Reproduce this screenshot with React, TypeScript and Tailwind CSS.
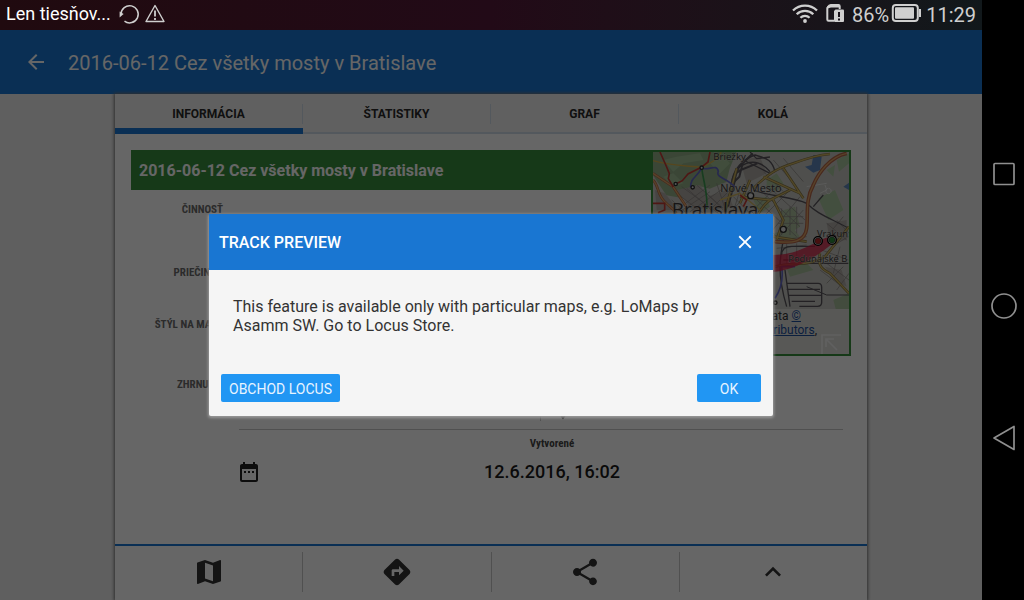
import React from 'react';
import { MdArrowBack, MdClose, MdDateRange, MdDirections, MdExpandLess, MdMap, MdPlace, MdShare } from 'react-icons/md';

const TABS = ['INFORMÁCIA', 'ŠTATISTIKY', 'GRAF', 'KOLÁ'];

const ACTIONS = [
  { label: 'Mapa', icon: MdMap },
  { label: 'Navigácia', icon: MdDirections },
  { label: 'Zdieľať', icon: MdShare },
  { label: 'Viac', icon: MdExpandLess },
];

const StatusBar: React.FC = () => (
  <div className="flex h-[30px] shrink-0 items-center justify-between bg-linear-to-r from-[#200a0f] via-[#220a17] to-[#11181b] pl-1.5 pr-1.5 text-[20px] leading-[30px] text-[#cfcfcf]">
    <div className="flex items-center pb-0.5">
      <span className="text-[18px] leading-7 text-white">Len tiesňov...</span>
      <svg className="ml-1.5 h-6 w-6" viewBox="0 0 24 24" fill="none" stroke="currentColor" strokeWidth="1.5">
        <path d="M7.5 19.2A8.6 8.6 0 1 0 4 12.2" />
        <path d="M2.6 9.5v6l4-3.4z" fill="currentColor" stroke="none" />
      </svg>
      <svg className="ml-0.5 h-6 w-6" viewBox="0 0 24 24" fill="none" stroke="currentColor" strokeWidth="1.4" strokeLinejoin="round">
        <path d="M12 3.5 21 19.5H3z" />
        <path d="M12 8.5v6M12 16v2" strokeWidth="1.8" />
      </svg>
    </div>
    <div className="flex items-center">
      <svg className="mb-1 h-5 w-[26px]" viewBox="0 0 26 20" fill="none" stroke="currentColor" strokeWidth="2.3">
        <path d="M1 7.5a17 17 0 0 1 24 0" />
        <path d="M4.7 11.2a11.8 11.8 0 0 1 16.6 0" />
        <path d="M8.4 14.8a6.6 6.6 0 0 1 9.2 0" />
        <circle cx="13" cy="18" r="1.9" fill="currentColor" stroke="none" />
      </svg>
      <svg className="mb-1 ml-2 h-5 w-[18px]" viewBox="0 0 18 20" fill="none">
        <path d="M8 17.8H2.5a1.2 1.2 0 0 1-1.2-1.2V5L5 2h7.5a1.2 1.2 0 0 1 1.2 1.2V6" stroke="currentColor" strokeWidth="2" />
        <path d="M1 5.5V3.5L3 1.5h10v3H5z" fill="currentColor" />
        <path d="M9.5 6.5H17a1 1 0 0 1 1 1V18a1 1 0 0 1-1 1H9a1 1 0 0 1-1-1V8z" fill="currentColor" />
        <path d="M13 9v5M13 15.5v2" stroke="#171219" strokeWidth="2" />
      </svg>
      <span className="ml-2">86%</span>
      <svg className="mb-1 ml-0.5 h-5 w-[31px]" viewBox="0 0 31 20" fill="none">
        <rect x="1.8" y="2" width="25" height="16" rx="3" stroke="currentColor" strokeWidth="2" />
        <rect x="4" y="4.3" width="19" height="11.4" rx="1" fill="currentColor" />
        <path d="M28 6h2v8h-2z" fill="currentColor" />
      </svg>
      <span className="ml-1">11:29</span>
    </div>
  </div>
);

const TrackMap: React.FC = () => (
  <svg className="block h-[157px] w-full" viewBox="39 36 588 471" preserveAspectRatio="none" aria-hidden="true">
    <rect x="39" y="36" width="588" height="471" fill="#c6c6c0" />
    {/* woods and parks */}
    <g fill="#93b088">
      <path d="M39 36h250l-20 50-10 40-50 20-40-10-30 40-60-10-40-60z" />
      <path d="M380 120l30-20 20 30-20 25-30-10zM340 180l40-10 10 30-30 20z" fill="#aac29b" />
      <path d="M590 60l37-20v30l-30 25zM535 175l50-25 25 60-45 30zM560 90l25-15-5 35z" fill="#a8c69d" />
      <path d="M415 215l50-15 15 60-40 25zM400 280l60-15 20 25-60 20z" fill="#adc19f" />
      <path d="M440 385l60-15 20 20-70 20zM580 480l47-20v47h-40z" fill="#a7bf9b" />
    </g>
    <g fill="#b9dcb0" fillOpacity="0.4">
      <path d="M70 60l40-10 20 20-30 25zM110 50l70-10 10 20-60 10zM70 110l30-10 30 30-30 10zM210 70l40-20 20 20-30 30z" />
    </g>
    <g fill="#b0aba6">
      <path d="M110 150l70-15 40 60-60 20zM200 170l60-20 20 50-70 10zM300 60l60-10 20 50-60 30z" />
      <path d="M560 250l60-10v60l-50 5zM555 380l50 10 15 50-40-20zM45 150l30 10 40 50H50z" />
    </g>
    <path d="M495 80l20-5 5-30 25 5-5 40-20 8zM610 140l17-12v22z" fill="#5f88bb" />
    {/* street grid */}
    <g fill="none" stroke="#86817f" strokeWidth="2">
      <path d="M340 170l130 120M360 150l120 110M385 140l110 100M330 210l100 100M420 130l-90 90M450 150l-110 110M480 170l-90 110M490 210l-90 100" />
      <path d="M110 160l80 60M140 145l80 70M170 135l80 70M110 210l100-75M150 215l100-70M400 60l70 80M430 55l60 70M370 95l60 60" />
      <path d="M95 180l40 35M120 215l90-60M190 150l60 60M230 130l30 90M210 210l60-60M125 140l110 80M280 170l50 50M270 220l60-70M300 150l-20 65" />
      <path d="M540 390l80 60M560 370l67 50M560 430l50-50M590 450l37-50M560 250l60 50M590 240l37 40M560 290l50-60M545 330l80 30M600 320l-20 80M575 320l50-30" />
      <path d="M420 300l80-10M410 325l90-10M440 310v60M470 310v60M420 230h70M415 250h75M425 205v80M450 200v85M470 200v80" />
      <path d="M540 160l20-10-5-15M500 140l60-10M565 145a8 8 0 1 0 1 0" stroke="#eee" />
    </g>
    {/* railways */}
    <g fill="none" stroke="#57545a" strokeWidth="4">
      <path d="M285 125c5-50 30-70 60-80M275 135c0-50 40-80 70-90 30 10 50 10 60 50M300 80c30-20 60-20 90 15M310 60l80 40M265 200l20-75M330 36l20 20 40-5" />
      <path d="M278 130l20-20 10-40 30-30M272 150c5-40 10-50 30-60l50-20" strokeWidth="6" />
      <path d="M340 150c50 20 120 20 160 40 30 30 60 40 127 75M430 300c-10 50-20 100 10 200M520 200l30-35" />
      <path d="M425 345c0-20 15-26 30-26h70M435 390l15 110M440 430h95q10 0 10 12v45q0 12-12 12h-55M440 448h100M445 466h98M455 484h70M430 360h50l15 10h130" />
      <path d="M500 440l60 25h67" strokeWidth="3" />
    </g>
    {/* roads */}
    <g fill="none" stroke="#857648" strokeWidth="8">
      <path d="M340 145c40-40 70-60 120-75 40-15 70-25 110-28M430 85l60 90M370 110l110 50M300 170l90 10 60-30M350 230c20-40 50-60 50-50l30 60-20 60" />
      <path d="M540 340c-10 40 10 50 30 60l57 60M405 380c60-15 100 0 150-30l72-90M330 120l-30 70M400 290l100 15M255 215l35-130" />
    </g>
    <g fill="none" stroke="#cdb360" strokeWidth="4">
      <path d="M39 62c50 15 100 15 145 20 20-10 40-15 60-45" stroke="#d6ae4a" />
      <path d="M340 145c40-40 70-60 120-75 40-15 70-25 110-28M430 85l60 90M370 110l110 50M300 170l90 10 60-30M350 230c20-40 50-60 50-50l30 60-20 60" />
      <path d="M240 180l60-20 60 50M400 290l100 15M540 340c-10 40 10 50 30 60l57 60M405 380c60-15 100 0 150-30l72-90M330 120l-30 70M255 215l35-130" />
    </g>
    <g fill="none" stroke="#b5654a" strokeWidth="11">
      <path d="M620 40c-50 10-85 60-100 95-25 45-15 90-20 130-5 40-40 45-95 40" />
      <path d="M39 120c20 20 10 45 40 70 10 10 20 15 30 30M39 100l60 40 40 60" strokeWidth="8" />
    </g>
    <g fill="none" stroke="#dca666" strokeWidth="4">
      <path d="M620 40c-50 10-85 60-100 95-25 45-15 90-20 130-5 40-40 45-95 40M39 120c20 20 10 45 40 70 10 10 20 15 30 30M39 100l60 40 40 60" />
    </g>
    <g fill="none" stroke="#c23a34" strokeWidth="5">
      <path d="M60 36l20 45 8 20-3 15 15 25M210 36l-6 30-20 16-40 20-17 20-20 10M39 190h35v20l-20 8M300 165l20 15-10 20" />
    </g>
    <path d="M185 82c5 45 20 80 15 125" fill="none" stroke="#3d9a51" strokeWidth="5" />
    <path d="M152 142c0-30 15-25 33-58 20 10 45-15 50 10-10 20 30 20 50 48M405 475c20-30 25-60 20-95h40" fill="none" stroke="#6266c4" strokeWidth="5" />
    <g fill="#ddd" stroke="#2a2a2a" strokeWidth="4">
      <circle cx="185" cy="83" r="5" />
      <circle cx="107" cy="132" r="5" />
      <circle cx="158" cy="142" r="5" />
      <circle cx="332" cy="167" r="9" />
      <circle cx="430" cy="268" r="9" />
      <circle cx="406" cy="488" r="5" />
    </g>
    <path d="M399 345c70 0 110-30 155-50l35-10-10 25c-50 40-110 80-180 86z" fill="#d4183f" fillOpacity="0.75" />
    <g fill="#3a3638" fontFamily="'Open Sans', sans-serif" stroke="#c6c6c0" strokeOpacity="0.6" strokeWidth="3" paintOrder="stroke">
      <text x="220" y="60" fontSize="29">Briežky</text>
      <text x="241" y="155" fontSize="33">Nové Mesto</text>
      <text x="95" y="229" fontSize="57">Bratislava</text>
      <text x="531" y="291" fontSize="28">Vrakun</text>
      <text x="445" y="365" fontSize="28">Podunajské B</text>
    </g>
    <g stroke="#000" strokeWidth="4">
      <circle cx="534" cy="303" r="13" fill="#ddd" />
      <circle cx="534" cy="303" r="9" fill="#b32a2a" strokeWidth="1" />
      <circle cx="576" cy="300" r="13" fill="#ddd" />
      <circle cx="576" cy="300" r="9" fill="#2e8b3a" strokeWidth="1" />
    </g>
  </svg>
);

const MapPreview: React.FC = () => (
  <figure className="relative w-[200px] shrink-0 border-2 border-[#388e3c]">
    <TrackMap />
    <figcaption className="h-[45px] bg-[#dcdcd8] pr-8 text-right text-[12px] leading-[14px] text-[#333]">
      <div className="pr-4">
        Map data{' '}
        <a href="#osm" className="text-[#1c4f9c] underline">©</a>
      </div>
      <a href="#osm" className="whitespace-nowrap text-[#1c4f9c] underline">OpenStreetMap contributors</a>,
    </figcaption>
    <svg className="absolute right-2 bottom-0 h-5 w-5" viewBox="0 0 20 20" fill="none" stroke="#fff" strokeOpacity="0.6" strokeWidth="1.6">
      <path d="M1 20V1h19M5 13V5h8M5 5l11 11" />
    </svg>
  </figure>
);

const RowLabel: React.FC<{ children: React.ReactNode }> = ({ children }) => (
  <dt className="w-[92px] text-right font-['Roboto_Condensed','Liberation_Sans_Narrow',Roboto,sans-serif] text-[11px] leading-4 font-bold whitespace-nowrap text-[#6b6b6b]">
    {children}
  </dt>
);

const TrackInfo: React.FC = () => (
  <div className="flex-1 bg-white p-4">
    <div className="flex items-start">
      <div className="min-w-0 flex-1">
        <h2 className="h-10 bg-[#388e3c] px-2 pt-px text-[16px] leading-10 font-bold text-white">
          2016-06-12 Cez všetky mosty v Bratislave
        </h2>
        <dl className="pt-3">
          <div className="h-[63px]"><RowLabel>ČINNOSŤ</RowLabel></div>
          <div className="h-[52px]"><RowLabel>PRIEČINOK</RowLabel></div>
          <div className="h-10"><RowLabel>ŠTÝL NA MAPE</RowLabel></div>
        </dl>
      </div>
      <MapPreview />
    </div>
    <div className="flex pt-5">
      <dl><RowLabel>ZHRNUTIE</RowLabel></dl>
      <div className="mr-2 ml-4 flex-1">
        <div className="flex h-[53px] justify-center border-b border-[#c8c8c8] pb-2">
          <div className="ml-[30px] flex items-end border-l border-[#c8c8c8] pl-3">
            <MdPlace className="h-5 w-5 text-[#333]" />
          </div>
        </div>
        <div className="flex items-end pt-1.5">
          <MdDateRange className="-ml-0.5 h-6 w-6 text-[#222]" />
          <div className="flex-1 text-center">
            <div className="font-['Roboto_Condensed','Liberation_Sans_Narrow',Roboto,sans-serif] text-[11px] leading-4 font-bold text-[#444]">Vytvorené</div>
            <div className="pt-2 text-[18px] leading-6 font-medium text-[#1a1a1a]">12.6.2016, 16:02</div>
          </div>
        </div>
      </div>
    </div>
  </div>
);

const PreviewDialog: React.FC = () => (
  <div className="absolute inset-0 flex items-center justify-center bg-black/60">
    <div role="dialog" aria-labelledby="dialog-title" className="w-full max-w-[564px] rounded-xs bg-[#f5f5f5] shadow-[0_1px_3px_1px_#999]">
      <div className="flex h-14 items-center justify-between bg-[#1976d2] pr-4 pl-2.5 text-white">
        <h3 id="dialog-title" className="pt-0.5 text-[16px] font-medium">TRACK PREVIEW</h3>
        <button type="button" aria-label="Zavrieť">
          <MdClose className="h-6 w-6 p-px" />
        </button>
      </div>
      <p className="px-6 pt-[27px] pb-[39px] text-[16px] leading-[19px] text-[#333]">
        This feature is available only with particular maps, e.g. LoMaps by Asamm SW. Go to Locus Store.
      </p>
      <div className="flex justify-between px-3 pb-3.5 text-[14px] leading-7 text-[#e8f4ff]">
        <button type="button" className="h-7 rounded-xs bg-[#2196f3] px-2 pt-px">OBCHOD LOCUS</button>
        <button type="button" className="h-7 w-16 rounded-xs bg-[#2196f3] pt-px">OK</button>
      </div>
    </div>
  </div>
);

const NavBar: React.FC = () => (
  <nav className="flex w-[42px] shrink-0 flex-col items-center justify-center gap-[104px] bg-black pt-3 pl-0.5 text-[#8f8f8f]">
    <button type="button" aria-label="Posledné">
      <svg className="h-7 w-7" viewBox="0 0 28 28" fill="none" stroke="currentColor" strokeWidth="1.7">
        <rect x="4" y="3.5" width="20" height="21" rx="1" />
      </svg>
    </button>
    <button type="button" aria-label="Domov">
      <svg className="h-7 w-7" viewBox="0 0 28 28" fill="none" stroke="currentColor" strokeWidth="1.7">
        <circle cx="14" cy="14" r="12" />
      </svg>
    </button>
    <button type="button" aria-label="Späť">
      <svg className="h-7 w-7" viewBox="0 0 28 28" fill="none" stroke="currentColor" strokeWidth="1.7" strokeLinejoin="round">
        <path d="M24 2.5v23L4 14z" />
      </svg>
    </button>
  </nav>
);

export default function App() {
  return (
    <div className="flex min-h-screen bg-black font-[Roboto,sans-serif]">
      <div className="flex min-w-0 flex-1 flex-col">
        <StatusBar />
        <div className="relative flex flex-1 flex-col bg-[#eee]">
          <header className="flex h-16 shrink-0 items-center bg-[#1976d2] pl-6 text-white">
            <button type="button" aria-label="Späť">
              <MdArrowBack className="h-6 w-6" />
            </button>
            <h1 className="ml-5 pt-0.5 text-[20px]">2016-06-12 Cez všetky mosty v Bratislave</h1>
          </header>
          <main className="mx-auto flex w-full max-w-[752px] flex-1 flex-col shadow-[0_0_3px_1px_#777]">
            <div role="tablist" className="flex h-10 shrink-0 bg-[#f0f0f0]">
              {TABS.map((tab, i) => (
                <button
                  key={tab}
                  type="button"
                  role="tab"
                  aria-selected={i === 0}
                  className={`flex flex-1 flex-col text-[12px] font-bold text-[#2a2a2a] ${i === 0 ? 'border-b-6 border-[#1976d2]' : 'border-b-2 border-[#cfdde8]'}`}
                >
                  <span className={`mt-2.5 h-5 w-full leading-5 ${i < 3 ? 'border-r border-[#cfdde8]' : ''}`}>{tab}</span>
                </button>
              ))}
            </div>
            <TrackInfo />
            <div className="flex h-14 shrink-0 items-center border-t-2 border-[#1976d2] bg-white pb-0.5">
              {ACTIONS.map(({ label, icon: Icon }, i) => (
                <button
                  key={label}
                  type="button"
                  aria-label={label}
                  className={`flex h-10 flex-1 items-center justify-center text-[#333] ${i < 3 ? 'border-r border-[#c8c8c8]' : ''}`}
                >
                  <Icon className="h-8 w-8" />
                </button>
              ))}
            </div>
          </main>
          <PreviewDialog />
        </div>
      </div>
      <NavBar />
    </div>
  );
}
